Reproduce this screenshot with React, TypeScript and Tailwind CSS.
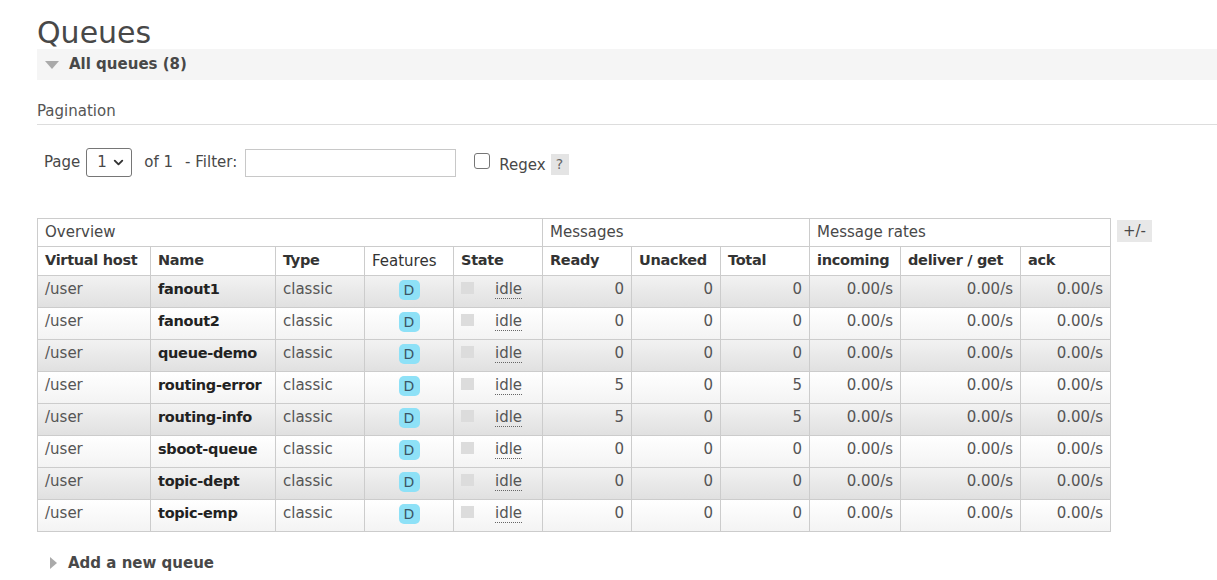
import { ChevronDown } from 'lucide-react';

type Queue = { name: string; ready: number; unacked: number; total: number };

const queues: Queue[] = [
    { name: 'fanout1', ready: 0, unacked: 0, total: 0 },
    { name: 'fanout2', ready: 0, unacked: 0, total: 0 },
    { name: 'queue-demo', ready: 0, unacked: 0, total: 0 },
    { name: 'routing-error', ready: 5, unacked: 0, total: 5 },
    { name: 'routing-info', ready: 5, unacked: 0, total: 5 },
    { name: 'sboot-queue', ready: 0, unacked: 0, total: 0 },
    { name: 'topic-dept', ready: 0, unacked: 0, total: 0 },
    { name: 'topic-emp', ready: 0, unacked: 0, total: 0 },
];

const cell = 'border border-[#ccc] px-[7px] align-middle whitespace-nowrap';
const th = `${cell} text-left font-bold text-[14.5px] tracking-[-0.3px] text-[#333]`;

export default function App() {
    return (
        <div className="min-h-[580px] bg-white pl-[37px] text-[15px] text-[#484848]" style={{ fontFamily: '"DejaVu Sans", Verdana, sans-serif' }}>
            <h1 className="pt-[17px] text-[30px] leading-[32px] font-normal text-[#484848]">Queues</h1>

            <div className="flex h-[31px] items-center bg-[#f5f5f5] pl-[8px]">
                <span className="mr-[10px] h-0 w-0 border-x-[7px] border-t-[8px] border-x-transparent border-t-[#aaa]" />
                <span className="font-bold text-[#484848]">All queues (8)</span>
            </div>

            <div className="mt-[22px] border-b border-[#ddd] pb-[4px] leading-[18px] text-[#555]">Pagination</div>

            <div className="mt-[23px] flex items-center pl-[7px]">
                <span className="text-[#484848]">Page</span>
                <div className="ml-[6px] flex h-[29px] w-[46px] items-center justify-between rounded-[3px] border border-[#767676] pr-[5px] pl-[10px]">
                    <span>1</span>
                    <ChevronDown size={15} strokeWidth={3} className="text-[#333]" />
                </div>
                <span className="ml-[12px]">of 1</span>
                <span className="ml-[12px]">- Filter:</span>
                <div className="ml-[8px] h-[28px] w-[211px] border border-[#c8c8c8]" />
                <div className="mt-[-3px] ml-[18px] h-[16px] w-[16px] rounded-[3px] border border-[#767676] bg-white" />
                <span className="mt-[6px] ml-[9px]">Regex</span>
                <span className="mt-[3px] ml-[5px] flex h-[21px] w-[18px] items-center justify-center bg-[#e4e4e4] text-[14px] text-[#666]">?</span>
            </div>

            <div className="mt-[41px] flex items-start gap-[6px]">
                <table className="w-[1073px] table-fixed border-collapse">
                    <colgroup>
                        <col className="w-[113px]" />
                        <col className="w-[125px]" />
                        <col className="w-[89px]" />
                        <col className="w-[89px]" />
                        <col className="w-[89px]" />
                        <col className="w-[89px]" />
                        <col className="w-[89px]" />
                        <col className="w-[89px]" />
                        <col className="w-[91px]" />
                        <col className="w-[120px]" />
                        <col className="w-[90px]" />
                    </colgroup>
                    <thead>
                        <tr className="h-[28px]">
                            <th colSpan={5} className={`${cell} text-left font-normal`}>Overview</th>
                            <th colSpan={3} className={`${cell} text-left font-normal`}>Messages</th>
                            <th colSpan={3} className={`${cell} text-left font-normal`}>Message rates</th>
                        </tr>
                        <tr className="h-[29px]">
                            <th className={th}>Virtual host</th>
                            <th className={th}>Name</th>
                            <th className={th}>Type</th>
                            <th className={`${cell} text-left font-normal text-[#333]`}>Features</th>
                            <th className={th}>State</th>
                            <th className={th}>Ready</th>
                            <th className={th}>Unacked</th>
                            <th className={th}>Total</th>
                            <th className={th}>incoming</th>
                            <th className={th}>deliver / get</th>
                            <th className={th}>ack</th>
                        </tr>
                    </thead>
                    <tbody>
                        {queues.map((q, i) => (
                            <tr key={q.name} className={`h-[32px] text-[#555] ${i % 2 === 0 ? 'bg-gradient-to-b from-[#f2f2f2] to-[#e0e0e0]' : 'bg-gradient-to-b from-white to-[#f3f3f3]'}`}>
                                <td className={`${cell} pb-[4px]`}>/user</td>
                                <td className={`${cell} pb-[4px] text-[14.5px] font-bold tracking-[-0.3px] text-[#222]`}>{q.name}</td>
                                <td className={`${cell} pb-[4px]`}>classic</td>
                                <td className={`${cell} pb-[3px] text-center`}>
                                    <span className="inline-flex h-[20px] w-[21px] items-center justify-center rounded-[5px] bg-[#8ee1f7] text-[14px] text-[#3b5566]">D</span>
                                </td>
                                <td className={`${cell} pb-[4px]`}>
                                    <div className="flex items-center">
                                        <span className="mt-[-4px] h-[12px] w-[13px] bg-[#dcdcdc]" />
                                        <span className="ml-[21px] border-b border-dotted border-[#666] leading-[17px]">idle</span>
                                    </div>
                                </td>
                                <td className={`${cell} pb-[4px] text-right`}>{q.ready}</td>
                                <td className={`${cell} pb-[4px] text-right`}>{q.unacked}</td>
                                <td className={`${cell} pb-[4px] text-right`}>{q.total}</td>
                                <td className={`${cell} pb-[4px] text-right`}>0.00/s</td>
                                <td className={`${cell} pb-[4px] text-right`}>0.00/s</td>
                                <td className={`${cell} pb-[4px] text-right`}>0.00/s</td>
                            </tr>
                        ))}
                    </tbody>
                </table>
                <span className="mt-[2px] flex h-[22px] w-[35px] items-center justify-center bg-[#e8e8e8] text-[#484848]">+/-</span>
            </div>

            <div className="mt-[20px] flex items-center pl-[13px]">
                <span className="mr-[11px] h-0 w-0 border-y-[6px] border-l-[7px] border-y-transparent border-l-[#aaa]" />
                <span className="font-bold text-[#484848]">Add a new queue</span>
            </div>
        </div>
    );
}
